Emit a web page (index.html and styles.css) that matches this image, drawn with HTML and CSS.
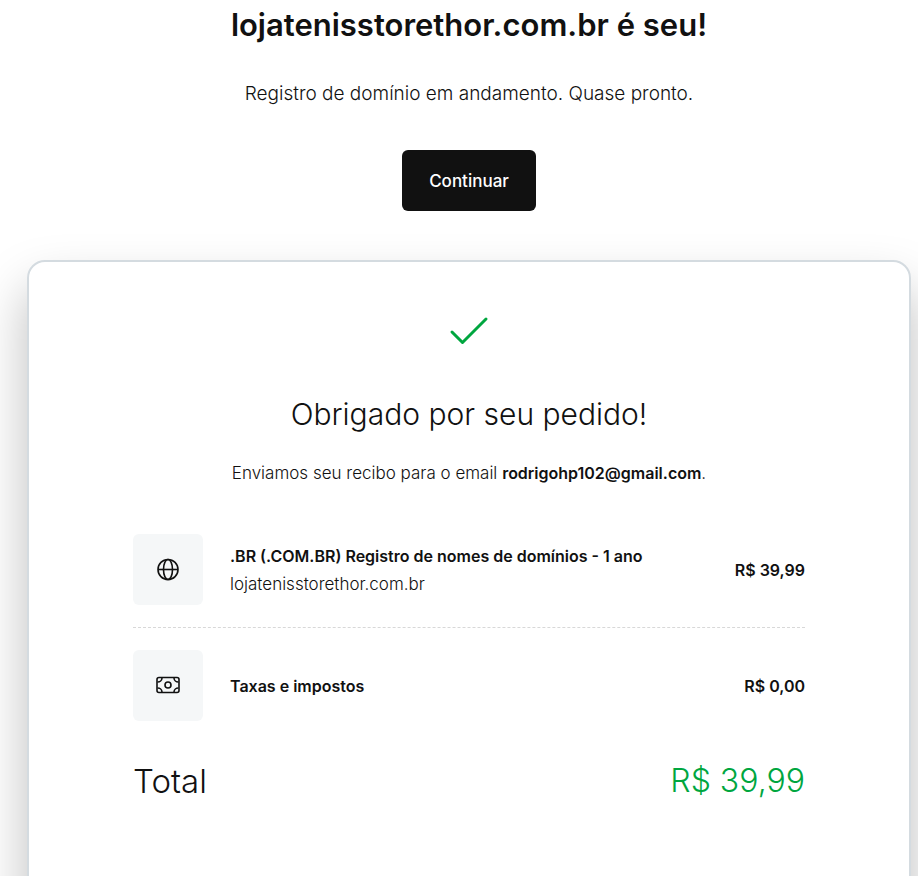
FILE: index.html
```html
<!DOCTYPE html>
<html lang="pt-BR">
<head>
<meta charset="utf-8">
<meta name="viewport" content="width=device-width, initial-scale=1">
<title>Pedido confirmado</title>
<link rel="stylesheet" href="styles.css">
</head>
<body>
<main class="page">
  <header class="intro">
    <h1 class="intro-title">lojatenisstorethor.com.br é seu!</h1>
    <p class="intro-text">Registro de domínio em andamento. Quase pronto.</p>
    <button class="button" type="button">Continuar</button>
  </header>
  <section class="card">
    <svg class="check" viewBox="0 0 40 30" aria-hidden="true"><path d="M3 16 13.500 26.500 37 3"/></svg>
    <h2 class="card-title">Obrigado por seu pedido!</h2>
    <p class="receipt">Enviamos seu recibo para o email <strong>rodrigohp102@gmail.com</strong>.</p>
    <ul class="items">
      <li class="item">
        <span class="tile">
          <svg class="icon" viewBox="0 0 24 24" aria-hidden="true"><circle cx="12" cy="11.500" r="10"/><ellipse cx="12" cy="11.500" rx="4.500" ry="10"/><path d="M2 11.500h20"/></svg>
        </span>
        <div class="details">
          <p class="name">.BR (.COM.BR) Registro de nomes de domínios - 1 ano</p>
          <p class="domain">lojatenisstorethor.com.br</p>
        </div>
        <p class="price">R$ 39,99</p>
      </li>
      <li class="item">
        <span class="tile">
          <svg class="icon" viewBox="0 0 24 24" aria-hidden="true"><rect x="1" y="3.500" width="22" height="15" rx="2"/><circle cx="12" cy="11" r="3"/><path d="M1.500 8A4.300 4.300 0 0 0 6 4M22.500 8A4.300 4.300 0 0 1 18 4M1.500 14A4.300 4.300 0 0 1 6 18M22.500 14A4.300 4.300 0 0 0 18 18"/></svg>
        </span>
        <div class="details">
          <p class="name">Taxas e impostos</p>
        </div>
        <p class="price">R$ 0,00</p>
      </li>
    </ul>
    <p class="total"><span>Total</span><span class="amount">R$ 39,99</span></p>
  </section>
</main>
</body>
</html>
```
FILE: styles.css
```css
* {
  box-sizing: border-box;
}

body {
  margin: 0;
  background: #fff;
  color: #111;
  font-family: Inter, "Liberation Sans", sans-serif;
  font-size: 16px;
  line-height: 28px;
}

h1, h2, p, ul {
  margin: 0;
  padding: 0;
}

.page {
  height: 100vh;
  overflow: hidden;
  padding: 0 7px 0 27px;
}

.intro {
  display: flex;
  flex-direction: column;
  align-items: center;
  text-align: center;
}

.intro-title {
  margin-top: 5px;
  font-size: 31px;
  line-height: 40px;
  font-weight: 600;
}

.intro-text {
  margin-top: 35px;
  font-size: 19px;
  font-weight: 300;
}

.button {
  margin: 42px 0 49px;
  padding: 17px 27px 16px;
  border: 0;
  border-radius: 6px;
  background: #111;
  color: #fff;
  font: inherit;
  font-size: 17px;
  line-height: 28px;
  font-weight: 500;
}

.card {
  padding: 54px 104px 160px;
  border: 2px solid #d4dbe0;
  border-radius: 18px;
  background: #fff;
  box-shadow: 0 28px 52px rgba(0, 0, 0, 0.26);
}

.check {
  display: block;
  width: 40px;
  height: 30px;
  margin: 0 auto;
  fill: none;
  stroke: #00a63f;
  stroke-width: 3;
  stroke-linecap: round;
  stroke-linejoin: round;
}

.card-title {
  margin-top: 48px;
  font-size: 30px;
  line-height: 40px;
  font-weight: 300;
  text-align: center;
}

.receipt {
  margin-top: 25px;
  text-align: center;
}

.receipt, .domain {
  font-size: 17px;
  font-weight: 300;
}

strong, .name, .price {
  font-size: 16px;
  font-weight: 600;
}

.items {
  margin-top: 25px;
  list-style: none;
}

.item {
  display: flex;
  align-items: center;
  gap: 27px;
  padding: 22px 0;
}

.item + .item {
  border-top: 1px dashed #d8d8d8;
}

.tile {
  display: flex;
  align-items: center;
  justify-content: center;
  flex: none;
  width: 70px;
  height: 71px;
  border-radius: 6px;
  background: #f5f7f8;
}

.icon {
  width: 24px;
  height: 24px;
  fill: none;
  stroke: #111;
  stroke-width: 1.6;
}

.details {
  flex: 1;
}

.price {
  white-space: nowrap;
}

.total {
  display: flex;
  justify-content: space-between;
  margin-top: 16px;
  font-size: 33px;
  line-height: 44px;
  font-weight: 300;
}

.amount {
  color: #00a63f;
  font-size: 32px;
}
```
